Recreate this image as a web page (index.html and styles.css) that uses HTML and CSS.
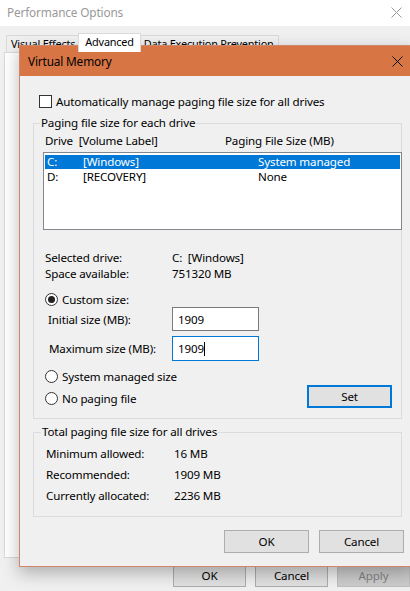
FILE: index.html
```html
<!DOCTYPE html>
<html>
<head>
<meta charset="utf-8">
<link rel="stylesheet" href="styles.css">
</head>
<body>
<div class="win">
  <div class="win-title">
    <span class="win-title-text">Performance Options</span>
    <svg class="win-close" width="11" height="11" viewBox="0 0 11 11"><path d="M0.5 0.5 L10.5 10.5 M10.5 0.5 L0.5 10.5" stroke="#9a9a9a" stroke-width="1" fill="none"/></svg>
  </div>
  <div class="tabs">
    <div class="tab">Visual Effects</div>
    <div class="tab tab-active">Advanced</div>
    <div class="tab">Data Execution Prevention</div>
  </div>
  <div class="panel"></div>
  <div class="win-buttons">
    <div class="btn btn-bg">OK</div>
    <div class="btn btn-bg">Cancel</div>
    <div class="btn btn-bg btn-disabled">Apply</div>
  </div>
</div>

<div class="dlg">
  <div class="dlg-title">
    <span class="dlg-title-text">Virtual Memory</span>
    <svg class="dlg-close" width="11" height="11" viewBox="0 0 11 11"><path d="M0.5 0.5 L10.5 10.5 M10.5 0.5 L0.5 10.5" stroke="#000" stroke-width="1" fill="none"/></svg>
  </div>
  <div class="dlg-body">
    <div class="auto-row">
      <span class="checkbox"></span>
      <span>Automatically manage paging file size for all drives</span>
    </div>

    <fieldset class="group group1">
      <legend>Paging file size for each drive</legend>
      <div class="list-head">
        <span class="col-drive">Drive&nbsp; [Volume Label]</span>
        <span class="col-size">Paging File Size (MB)</span>
      </div>
      <div class="listbox">
        <div class="lrow lrow-sel"><span class="c1">C:</span><span class="c2">[Windows]</span><span class="c3">System managed</span></div>
        <div class="lrow"><span class="c1">D:</span><span class="c2">[RECOVERY]</span><span class="c3">None</span></div>
      </div>

      <div class="info">
        <span>Selected drive:</span><span>C:&nbsp; [Windows]</span>
        <span>Space available:</span><span>751320 MB</span>
      </div>

      <div class="radio-row radio-custom"><span class="radio radio-on"></span><span>Custom size:</span></div>
      <div class="field-row field-initial">
        <span class="field-label">Initial size (MB):</span>
        <div class="input">1909</div>
      </div>
      <div class="field-row field-max">
        <span class="field-label">Maximum size (MB):</span>
        <div class="input input-focus">1909<span class="caret"></span></div>
      </div>

      <div class="bottom-row">
        <div class="radios">
          <div class="radio-row"><span class="radio"></span><span>System managed size</span></div>
          <div class="radio-row"><span class="radio"></span><span>No paging file</span></div>
        </div>
        <div class="btn btn-set">Set</div>
      </div>
    </fieldset>

    <fieldset class="group group2">
      <legend>Total paging file size for all drives</legend>
      <div class="totals">
        <span>Minimum allowed:</span><span>16 MB</span>
        <span>Recommended:</span><span>1909 MB</span>
        <span>Currently allocated:</span><span>2236 MB</span>
      </div>
    </fieldset>

    <div class="dlg-buttons">
      <div class="btn">OK</div>
      <div class="btn">Cancel</div>
    </div>
  </div>
</div>
</body>
</html>
```
FILE: styles.css
```css
* { box-sizing: border-box; }
html, body {
  margin: 0;
  padding: 0;
  width: 410px;
  height: 591px;
  overflow: hidden;
}
body {
  background: #f0f0f0;
  font-family: "Noto Sans", "DejaVu Sans", sans-serif;
  font-size: 11.6px;
  letter-spacing: -0.15px;
  color: #000;
  position: relative;
}

/* background window */
.win { width: 410px; height: 591px; }
.win-title {
  height: 26px;
  background: #fff;
  display: flex;
  align-items: center;
  justify-content: space-between;
  padding: 0 7px 2px 7px;
}
.win-title-text { font-size: 11.8px; color: #999; }
.win-close { margin-right: 1px; }
.tabs {
  display: flex;
  margin-top: 7px;
  padding-left: 6px;
  height: 19px;
  align-items: flex-end;
}
.tab {
  height: 17px;
  border: 1px solid #d9d9d9;
  border-bottom: none;
  background: #f0f0f0;
  padding: 0 4px;
  line-height: 16px;
  font-size: 10.9px;
  letter-spacing: -0.2px;
}
.tab-active {
  height: 19px;
  background: #fff;
  margin: 0 -2px;
  padding: 0 6px;
  position: relative;
  z-index: 1;
}
.panel {
  margin-left: 4px;
  height: 506px;
  background: #fff;
  border: 1px solid #d9d9d9;
  width: 420px;
}
.win-buttons {
  display: flex;
  gap: 9px;
  margin-top: 6px;
  padding-left: 173px;
}
.btn {
  width: 85px;
  height: 23px;
  background: #e1e1e1;
  border: 1px solid #adadad;
  display: flex;
  align-items: center;
  justify-content: center;
}
.btn-bg { width: 73px; }
.btn-disabled { background: #cccccc; border-color: #bfbfbf; color: #838383; }

/* dialog */
.dlg {
  position: absolute;
  left: 19px;
  top: 45px;
  width: 396px;
  background: #f0f0f0;
  border: 1px solid #d0866a;
  box-shadow: 0 6px 16px rgba(0,0,0,0.28);
}
.dlg-title {
  height: 30px;
  background: #d77545;
  display: flex;
  align-items: center;
  justify-content: space-between;
  padding: 0 11px 0 8px;
}
.dlg-title-text { font-size: 11.8px; color: #000; }
.dlg-body { padding: 0 0 13px 0; }

.auto-row {
  margin: 19px 0 0 19px;
  display: flex;
  align-items: center;
  gap: 4px;
  height: 13px;
}
.checkbox {
  width: 13px;
  height: 13px;
  border: 1px solid #333;
  background: #fff;
  display: inline-block;
}

.group {
  margin: 8px 12px 0 13px;
  border: 1px solid #dcdcdc;
  padding: 0 0 0 11px;
  min-width: 0;
}
.group legend {
  padding: 0 1px;
  margin-left: -5px;
  line-height: 14px;
}
.list-head {
  margin-top: 3px;
  display: flex;
  height: 15px;
  line-height: 15px;
}
.col-drive { width: 180px; }
.listbox {
  margin: 4px -1px 0 -2px;
  height: 78px;
  background: #fff;
  border: 1px solid #828790;
  padding: 2px 1px;
}
.lrow {
  display: flex;
  height: 14px;
  line-height: 14px;
  margin-bottom: 1px;
}
.lrow-sel { background: #0078d7; color: #fff; }
.c1 { width: 38px; padding-left: 2px; }
.c2 { width: 175px; }

.info {
  margin-top: 20px;
  display: grid;
  grid-template-columns: 127px auto;
  line-height: 16px;
}
.radio-row {
  display: flex;
  align-items: center;
  gap: 4px;
  height: 16px;
}
.radio-custom { margin-top: 9px; }
.radio {
  width: 13px;
  height: 13px;
  border: 1px solid #333;
  border-radius: 50%;
  background: #fff;
  display: inline-flex;
  align-items: center;
  justify-content: center;
}
.radio-on::after {
  content: "";
  width: 7px;
  height: 7px;
  border-radius: 50%;
  background: #222;
}
.field-row {
  display: flex;
  align-items: center;
}
.field-label { width: 127px; padding-left: 3px; }
.field-max { margin-top: 5px; }
.field-max .field-label { padding-left: 4px; }
.input {
  width: 87px;
  height: 24px;
  border: 1px solid #7a7a7a;
  background: #fff;
  padding-left: 5px;
  display: flex;
  align-items: center;
}
.input-focus { height: 25px; border-color: #0078d7; }
.caret {
  display: inline-block;
  width: 1px;
  height: 14px;
  background: #000;
}
.bottom-row {
  margin-top: 7px;
  display: flex;
  justify-content: space-between;
  align-items: flex-end;
  padding-bottom: 10px;
}
.radios { display: flex; flex-direction: column; gap: 6px; padding-bottom: 2px; }
.btn-set {
  border: 2px solid #0078d7;
  margin-right: 9px;
}

.group2 { margin-top: 6px; padding-left: 12px; }
.totals {
  margin-top: 4px;
  display: grid;
  grid-template-columns: 128px auto;
  grid-auto-rows: 21px;
  align-items: center;
  padding-bottom: 10px;
}
.dlg-buttons {
  margin: 13px 0 0 0;
  padding-left: 204px;
  display: flex;
  gap: 10px;
}
```
